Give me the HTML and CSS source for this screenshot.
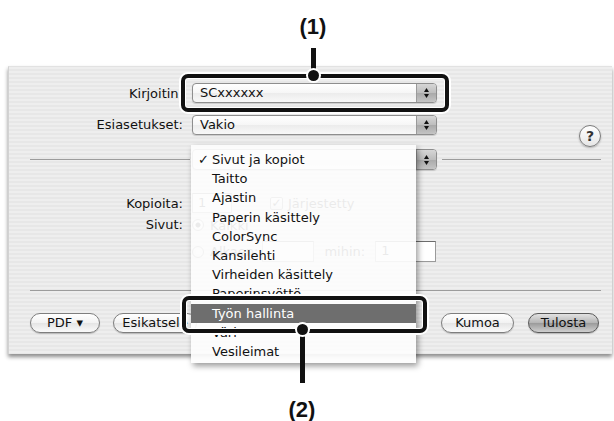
FILE: index.html
```html
<!DOCTYPE html>
<html lang="fi">
  <head>
    <meta charset="UTF-8" />
    <title>Tulosta</title>
    <link rel="stylesheet" href="styles.css">
  </head>
  <body>
    <div class="page">
      <div class="dialog">
        <div class="row">
          <span class="label">Kirjoitin:</span>
          <div class="popup">
            <span class="popup-text">SCxxxxxx</span>
            <span class="arrows"><svg width="7" height="12" viewBox="0 0 7 12"><polygon points="3.5,1 6,5 1,5" /><polygon points="1,7 6,7 3.5,11" /></svg></span>
          </div>
        </div>

        <div class="row row-presets">
          <span class="label">Esiasetukset:</span>
          <div class="popup">
            <span class="popup-text">Vakio</span>
            <span class="arrows"><svg width="7" height="12" viewBox="0 0 7 12"><polygon points="3.5,1 6,5 1,5" /><polygon points="1,7 6,7 3.5,11" /></svg></span>
          </div>
          <span class="help">?</span>
        </div>

        <div class="sep-row">
          <span class="line line-left"></span>
          <!-- the open menu covers this popup's label -->
          <div class="popup popup-tall">
            <span class="popup-text"></span>
            <span class="arrows"><svg width="7" height="12" viewBox="0 0 7 12"><polygon points="3.5,1 6,5 1,5" /><polygon points="1,7 6,7 3.5,11" /></svg></span>
          </div>
          <span class="line line-right"></span>
        </div>

        <div class="row row-copies">
          <span class="label">Kopioita:</span>
          <span class="field field-copies">1</span>
          <span class="checkbox">✓</span>
          <span class="check-label">Järjestetty</span>
        </div>

        <div class="row row-pages">
          <span class="label">Sivut:</span>
          <div class="radios">
            <div class="radio-row">
              <span class="radio on"></span>
              <span>Kaikki</span>
            </div>
            <div class="radio-row">
              <span class="radio"></span>
              <span>Alkaen:</span>
              <span class="field field-from"></span>
              <span class="to-label">mihin:</span>
              <span class="field field-to">1</span>
            </div>
          </div>
        </div>

        <div class="separator"></div>

        <div class="buttons">
          <span class="btn btn-pdf">PDF ▾</span>
          <span class="btn btn-preview">Esikatsele</span>
          <span class="btn btn-cancel">Kumoa</span>
          <span class="btn btn-print">Tulosta</span>
        </div>
      </div>

      <ul class="menu">
        <li class="menu-item"><span class="mark">✓</span><span>Sivut ja kopiot</span></li>
        <li class="menu-item"><span class="mark"></span><span>Taitto</span></li>
        <li class="menu-item"><span class="mark"></span><span>Ajastin</span></li>
        <li class="menu-item"><span class="mark"></span><span>Paperin käsittely</span></li>
        <li class="menu-item"><span class="mark"></span><span>ColorSync</span></li>
        <li class="menu-item"><span class="mark"></span><span>Kansilehti</span></li>
        <li class="menu-item"><span class="mark"></span><span>Virheiden käsittely</span></li>
        <li class="menu-item"><span class="mark"></span><span>Paperinsyöttö</span></li>
        <li class="menu-item selected"><span class="mark"></span><span>Työn hallinta</span></li>
        <li class="menu-item"><span class="mark"></span><span>Väri</span></li>
        <li class="menu-item"><span class="mark"></span><span>Vesileimat</span></li>
      </ul>

      <!-- callouts -->
      <div class="callout-num num-1">(1)</div>
      <div class="stem stem-1"></div>
      <div class="callout box-1"></div>
      <div class="dot dot-1"></div>

      <div class="callout box-2"></div>
      <div class="stem stem-2"></div>
      <div class="dot dot-2"></div>
      <div class="callout-num num-2">(2)</div>
    </div>
  </body>
</html>
```

FILE: styles.css
```css
body {
  margin: 0;
  background: #ffffff;
  font-family: "DejaVu Sans", sans-serif;
  font-size: 13px;
  color: #111;
}

.page {
  position: relative;
  width: 614px;
  height: 421px;
  overflow: hidden;
}

.dialog {
  margin: 66px 0 0 8px;
  width: 604px;
  padding: 16px 0 21px;
  box-sizing: border-box;
  border-left: 1px solid #d2d2d2;
  border-top: 1px solid #e2e2e2;
  background: repeating-linear-gradient(#eeeeee 0 2px, #e7e7e7 2px 4px);
  box-shadow: 0 3px 4px rgba(0, 0, 0, 0.45);
}

.row {
  display: flex;
  align-items: center;
  height: 20px;
}

.label {
  flex: 0 0 174px;
  margin-right: 9px;
  text-align: right;
}

.row-presets {
  margin-top: 12px;
  align-items: flex-start;
}

.row-presets .label {
  line-height: 20px;
}

.popup {
  display: flex;
  width: 245px;
  height: 20px;
  box-sizing: border-box;
  border: 1px solid #8e8e8e;
  border-radius: 4px;
  background: linear-gradient(#ffffff, #f6f6f6 50%, #ececec 51%, #f8f8f8);
  box-shadow: 0 1px 1px rgba(0, 0, 0, 0.15);
}

.popup-tall {
  height: 21px;
}

.popup-text {
  flex: 1;
  padding-left: 7px;
  line-height: 18px;
}

.arrows {
  flex: 0 0 19px;
  display: flex;
  align-items: center;
  justify-content: center;
  border-left: 1px solid #9a9a9a;
  border-radius: 0 3px 3px 0;
  background: linear-gradient(#d6d6d6, #bdbdbd 50%, #a9a9a9 51%, #c4c4c4);
}

.arrows svg {
  fill: #111;
}

.help {
  margin: 10px 11px 0 auto;
  width: 22px;
  height: 22px;
  box-sizing: border-box;
  border: 1px solid #7c7c7c;
  border-radius: 50%;
  background: linear-gradient(#ffffff, #e6e6e6);
  box-shadow: 0 1px 2px rgba(0, 0, 0, 0.25);
  text-align: center;
  font-weight: bold;
  font-size: 14px;
  line-height: 20px;
  color: #333;
}

.sep-row {
  display: flex;
  align-items: center;
  margin-top: 14px;
  padding: 0 11px 0 21px;
}

.line {
  height: 1px;
  background: #9c9c9c;
}

.line-left {
  flex: 0 0 160px;
  margin-right: 2px;
}

.line-right {
  flex: 1;
  margin-left: 5px;
}

.row-copies {
  margin-top: 23px;
}

.field {
  height: 20px;
  box-sizing: border-box;
  border: 1px solid #9a9a9a;
  border-top-color: #6c6c6c;
  background: #ffffff;
  padding-left: 5px;
  line-height: 18px;
}

.field-copies {
  width: 40px;
  margin-right: 38px;
}

.checkbox {
  width: 13px;
  height: 13px;
  box-sizing: border-box;
  border: 1px solid #777;
  border-radius: 2px;
  background: linear-gradient(#fff, #ddd);
  font-size: 12px;
  line-height: 11px;
  text-align: center;
  margin-right: 5px;
}

.row-pages {
  margin-top: 2px;
  height: auto;
  align-items: flex-start;
}

.row-pages .label {
  line-height: 20px;
}

.radios {
  display: flex;
  flex-direction: column;
  gap: 6px;
}

.radio-row {
  display: flex;
  align-items: center;
  gap: 6px;
  height: 20px;
}

.radio-row + .radio-row {
  height: 21px;
}

.radio {
  width: 12px;
  height: 12px;
  box-sizing: border-box;
  border: 1px solid #777;
  border-radius: 50%;
  background: radial-gradient(#ffffff, #dddddd);
}

.radio.on {
  background: radial-gradient(#222 0 2px, #ffffff 3px, #dddddd);
}

.field-from {
  width: 52px;
  height: 21px;
  margin-left: -2px;
}

.to-label {
  margin-left: 4px;
}

.field-to {
  width: 61px;
  height: 21px;
  margin-left: 4px;
}

.separator {
  margin: 28px 11px 0 21px;
  height: 1px;
  background: #9c9c9c;
}

.buttons {
  display: flex;
  align-items: center;
  margin-top: 22px;
  padding: 0 13px 0 21px;
}

.btn {
  height: 20px;
  box-sizing: border-box;
  border: 1px solid #7e7e7e;
  border-radius: 10px;
  background: linear-gradient(#ffffff, #f2f2f2 50%, #e4e4e4 51%, #fafafa);
  box-shadow: 0 1px 1px rgba(0, 0, 0, 0.2);
  text-align: center;
  line-height: 18px;
}

.btn-pdf {
  width: 70px;
}

.btn-preview {
  width: 84px;
  margin-left: 13px;
}

.btn-cancel {
  width: 73px;
  margin-left: auto;
}

.btn-print {
  width: 71px;
  margin-left: 14px;
  border-color: #5a5a5a;
  background: linear-gradient(#e2e2e2, #b4b4b4 50%, #9a9a9a 51%, #cfcfcf);
}

.menu {
  position: absolute;
  left: 191px;
  top: 145px;
  width: 225px;
  margin: 0;
  padding: 5px 0 2px;
  list-style: none;
  background: rgba(253, 253, 253, 0.92);
  box-shadow: 2px 3px 6px rgba(0, 0, 0, 0.4);
  font-size: 13px;
}

.menu-item {
  display: grid;
  grid-template-columns: 21px 1fr;
  height: 19.2px;
  line-height: 19.2px;
}

.mark {
  text-align: right;
  padding-right: 3px;
}

.selected {
  background: #6e6e6e;
  color: #ffffff;
}

.callout {
  position: absolute;
  box-sizing: border-box;
  border: 4px solid #111;
  border-radius: 7px;
  box-shadow: 0 0 0 2px #ffffff, inset 0 0 0 1px #ffffff;
}

.box-1 {
  left: 181px;
  top: 74px;
  width: 268px;
  height: 38px;
}

.box-2 {
  left: 182px;
  top: 296px;
  width: 245px;
  height: 37px;
}

.stem {
  position: absolute;
  width: 5px;
  background: #111;
}

.stem-1 {
  left: 311px;
  top: 48px;
  height: 28px;
}

.stem-2 {
  left: 300px;
  top: 330px;
  height: 53px;
}

.dot {
  position: absolute;
  width: 11px;
  height: 11px;
  border-radius: 50%;
  background: #111;
  box-shadow: 0 0 0 2px #ffffff;
}

.dot-1 {
  left: 308px;
  top: 70px;
}

.dot-2 {
  left: 297px;
  top: 324px;
}

.callout-num {
  position: absolute;
  width: 60px;
  text-align: center;
  font-family: "Liberation Sans", Arial, sans-serif;
  font-weight: bold;
  font-size: 22px;
  line-height: 22px;
  color: #111;
}

.num-1 {
  left: 283px;
  top: 16px;
}

.num-2 {
  left: 272px;
  top: 399px;
}
```
